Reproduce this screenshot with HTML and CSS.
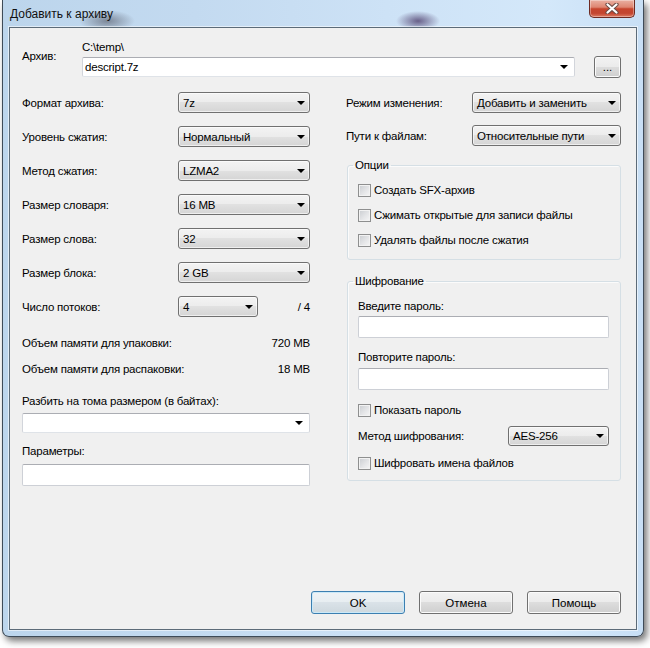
FILE: index.html
```html
<!DOCTYPE html>
<html lang="ru">
<head>
<meta charset="utf-8">
<title>Добавить к архиву</title>
<link rel="stylesheet" href="styles.css">
</head>
<body>
<div class="window">
  <div class="titlebar">
    <span class="title">Добавить к архиву</span>
    <button class="close" aria-label="Закрыть">
      <svg width="14" height="11" viewBox="0 0 14 11"><path d="M2.5 1.5 L11.5 9.5 M11.5 1.5 L2.5 9.5" stroke="#6b4a44" stroke-width="4.2" stroke-linecap="round"/><path d="M2.5 1.5 L11.5 9.5 M11.5 1.5 L2.5 9.5" stroke="#ffffff" stroke-width="2.2" stroke-linecap="round"/></svg>
    </button>
  </div>
  <div class="client">
    <div class="archive-row">
      <span class="archive-label">Архив:</span>
      <div class="archive-path">
        <span class="path-text">C:\temp\</span>
        <div class="combo edit"><span>descript.7z</span><i class="arrow"></i></div>
      </div>
      <button class="btn browse">...</button>
    </div>

    <div class="columns">
      <div class="left">
        <div class="form-grid">
          <span>Формат архива:</span>
          <div class="combo"><span>7z</span><i class="arrow"></i></div>
          <span>Уровень сжатия:</span>
          <div class="combo"><span>Нормальный</span><i class="arrow"></i></div>
          <span>Метод сжатия:</span>
          <div class="combo"><span>LZMA2</span><i class="arrow"></i></div>
          <span>Размер словаря:</span>
          <div class="combo"><span>16 MB</span><i class="arrow"></i></div>
          <span>Размер слова:</span>
          <div class="combo"><span>32</span><i class="arrow"></i></div>
          <span>Размер блока:</span>
          <div class="combo"><span>2 GB</span><i class="arrow"></i></div>
          <span>Число потоков:</span>
          <div class="threads">
            <div class="combo small"><span>4</span><i class="arrow"></i></div>
            <span>/ 4</span>
          </div>
        </div>
        <div class="memory">
          <div class="mem-row"><span>Объем памяти для упаковки:</span><span>720 MB</span></div>
          <div class="mem-row"><span>Объем памяти для распаковки:</span><span>18 MB</span></div>
        </div>
        <div class="field split">
          <span class="field-label">Разбить на тома размером (в байтах):</span>
          <div class="combo edit"><span></span><i class="arrow"></i></div>
        </div>
        <div class="field params">
          <span class="field-label">Параметры:</span>
          <div class="textbox"></div>
        </div>
      </div>

      <div class="right">
        <div class="right-grid">
          <span>Режим изменения:</span>
          <div class="combo"><span>Добавить и заменить</span><i class="arrow"></i></div>
          <span>Пути к файлам:</span>
          <div class="combo"><span>Относительные пути</span><i class="arrow"></i></div>
        </div>

        <fieldset class="group options">
          <legend>Опции</legend>
          <label class="check-row"><span class="check"></span>Создать SFX-архив</label>
          <label class="check-row"><span class="check"></span>Сжимать открытые для записи файлы</label>
          <label class="check-row"><span class="check"></span>Удалять файлы после сжатия</label>
        </fieldset>

        <fieldset class="group encryption">
          <legend>Шифрование</legend>
          <span class="field-label">Введите пароль:</span>
          <div class="textbox pw1"></div>
          <span class="field-label repeat">Повторите пароль:</span>
          <div class="textbox pw2"></div>
          <label class="check-row show-pw"><span class="check"></span>Показать пароль</label>
          <div class="method-row">
            <span>Метод шифрования:</span>
            <div class="combo enc"><span>AES-256</span><i class="arrow"></i></div>
          </div>
          <label class="check-row enc-names"><span class="check"></span>Шифровать имена файлов</label>
        </fieldset>
      </div>
    </div>

    <div class="buttons">
      <button class="btn action default">OK</button>
      <button class="btn action">Отмена</button>
      <button class="btn action">Помощь</button>
    </div>
  </div>
</div>
</body>
</html>
```

FILE: styles.css
```css
* { box-sizing: border-box; }

html, body {
  margin: 0;
  width: 650px;
  height: 648px;
  overflow: hidden;
  background: #ffffff;
}

body {
  padding: 0 0 0 2px;
  font-family: "Liberation Sans", Arial, sans-serif;
  font-size: 11.5px;
  letter-spacing: -0.2px;
  color: #000;
}

.window {
  width: 642px;
  height: 637px;
  border: 1px solid #3e4b58;
  border-top: none;
  border-radius: 0 0 7px 7px;
  box-shadow: 3px 4px 7px rgba(0, 0, 0, 0.55);
  display: flex;
  flex-direction: column;
  background:
    radial-gradient(28px 11px at 104px 21px, rgba(95, 100, 115, 0.7), rgba(95, 100, 115, 0)),
    radial-gradient(22px 10px at 415px 21px, rgba(70, 52, 100, 0.75), rgba(70, 52, 100, 0)),
    linear-gradient(90deg, #bcd5ec 0%, #c3daf0 30%, #cde2f6 60%, #d4e8fa 85%, #c8dff5 100%);
}

.titlebar {
  height: 27px;
  display: flex;
  align-items: flex-start;
  padding: 0 8px 0 7px;
}

.title {
  margin-top: 7px;
  line-height: 14px;
  font-size: 12px;
  letter-spacing: 0;
  color: #111;
}

.close {
  margin-left: auto;
  width: 46px;
  height: 18px;
  padding: 0;
  border: 1px solid #6d2a22;
  border-top: none;
  border-radius: 0 0 5px 5px;
  background: linear-gradient(#eab0a2 0%, #de8672 42%, #c6442d 52%, #c34530 78%, #dd7a62 100%);
  box-shadow: inset 0 0 0 1px rgba(255, 255, 255, 0.35);
  display: flex;
  align-items: center;
  justify-content: center;
}

.client {
  height: 603px;
  margin: 0 6px;
  border: 1px solid #5c6b78;
  background: #f0f0f0;
  padding: 12px 15px 15px 12px;
  display: flex;
  flex-direction: column;
  box-shadow: 0 0 0 1px rgba(255, 255, 255, 0.55);
}

/* archive row */
.archive-row {
  display: flex;
  align-items: flex-start;
}

.archive-label {
  width: 60px;
  margin-top: 9px;
  line-height: 14px;
}

.archive-path {
  width: 493px;
  display: flex;
  flex-direction: column;
}

.path-text { line-height: 14px; }

.archive-path .combo { margin-top: 3px; }

.browse {
  margin: 16px 0 0 19px;
  width: 27px;
  height: 22px;
  font-size: 10px;
  line-height: 18px;
}

/* combos */
.combo {
  height: 21px;
  border: 1px solid #707070;
  border-radius: 3px;
  background: linear-gradient(#f3f3f3 0%, #ececec 50%, #e1e1e1 50%, #d5d5d5 100%);
  box-shadow: inset 0 0 0 1px rgba(255, 255, 255, 0.6);
  display: flex;
  align-items: center;
  padding: 0 4px 0 4px;
  white-space: nowrap;
}

.combo.edit {
  height: 20px;
  background: #fff;
  border-color: #abadb3 #d2d5db #dfe3e8 #d2d5db;
  border-radius: 2px;
  box-shadow: none;
  padding: 0 6px 0 2px;
}

.arrow {
  margin-left: auto;
  width: 0;
  height: 0;
  border-left: 4px solid transparent;
  border-right: 4px solid transparent;
  border-top: 4px solid #000;
  flex: none;
}

/* left column */
.columns {
  display: grid;
  grid-template-columns: 288px 275px;
  column-gap: 36px;
  margin-top: 14px;
}

.form-grid {
  display: grid;
  grid-template-columns: 156px 132px;
  grid-auto-rows: 21px;
  row-gap: 13px;
  align-items: center;
}

.threads {
  display: flex;
  align-items: center;
  justify-content: space-between;
}

.combo.small { width: 80px; }

.memory {
  margin-top: 19px;
  display: flex;
  flex-direction: column;
  gap: 12px;
}

.mem-row {
  display: flex;
  justify-content: space-between;
  line-height: 14px;
}

.field {
  display: flex;
  flex-direction: column;
}

.field-label { line-height: 14px; }

.field.split { margin-top: 18px; }
.field.split .combo { margin-top: 5px; }

.field.params { margin-top: 11px; }
.field.params .textbox { margin-top: 6px; }

.textbox {
  height: 22px;
  background: #fff;
  border: 1px solid #cdd0d6;
  border-top-color: #abadb3;
  border-radius: 2px;
}

/* right column */
.right-grid {
  display: grid;
  grid-template-columns: 126px 149px;
  grid-auto-rows: 21px;
  row-gap: 12px;
  align-items: center;
}

.group {
  margin: 12px 0 0 1px;
  border: 1px solid #d5dfe5;
  border-radius: 3px;
  box-shadow: inset 1px 1px 0 #fbfbfb;
  min-width: 0;
  display: flex;
  flex-direction: column;
}

.group legend {
  padding: 0 2px;
  margin-left: -5px;
  line-height: 14px;
}

.options {
  padding: 11px 11px 12px 10px;
  gap: 11px;
}

.check-row {
  display: flex;
  align-items: center;
  gap: 3px;
  line-height: 14px;
  height: 14px;
}

.check {
  width: 13px;
  height: 13px;
  flex: none;
  border: 1px solid #8e8f8f;
  background: linear-gradient(135deg, #c9ccd0 0%, #e4e5e7 55%, #f6f6f6 100%);
  box-shadow: inset 0 0 0 1px #f2f2f2;
}

.encryption {
  margin-top: 14px;
  padding: 11px 11px 10px 10px;
}

.pw1 { margin-top: 3px; }
.repeat { margin-top: 12px; }
.pw2 { margin-top: 4px; }
.show-pw { margin-top: 13px; }

.method-row {
  margin-top: 9px;
  display: flex;
  align-items: center;
  justify-content: space-between;
}

.combo.enc { width: 101px; height: 20px; }

.enc-names { margin-top: 10px; }

/* buttons */
.btn {
  font: inherit;
  color: #000;
  padding: 0;
  border: 1px solid #707070;
  border-radius: 3px;
  background: linear-gradient(#f2f2f2 0%, #ebebeb 50%, #dddddd 50%, #cfcfcf 100%);
  box-shadow: inset 0 0 0 1px #fbfbfb;
}

.buttons {
  margin-top: auto;
  display: flex;
  justify-content: flex-end;
  gap: 14px;
}

.action {
  width: 94px;
  height: 23px;
}

.default {
  border-color: #3c7fb1;
  background: linear-gradient(#eef3f6 0%, #e7edf1 50%, #dae2e8 50%, #ced8de 100%);
  box-shadow: inset 0 0 0 1px #cbe9f8;
}
```
